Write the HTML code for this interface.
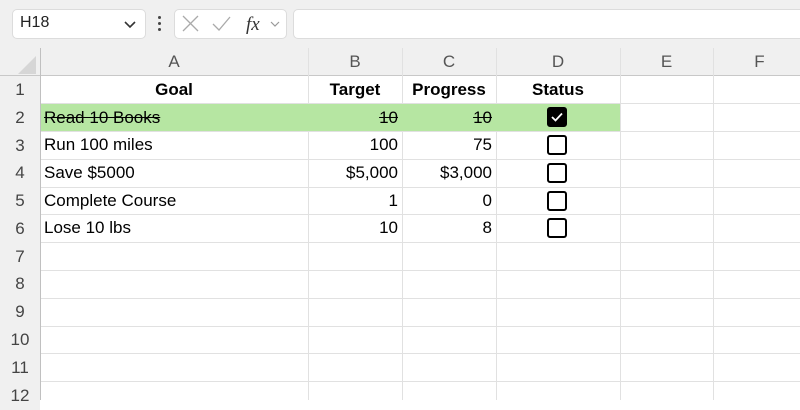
<!DOCTYPE html>
<html><head><style>
*{margin:0;padding:0;box-sizing:border-box}
body{width:800px;height:400px;overflow:hidden;background:#fff;font-family:"Liberation Sans",sans-serif;position:relative}
.a{position:absolute}
.tb{left:0;top:0;width:800px;height:48px;background:#f0f0f0}
.box{background:#fff;border:1px solid #dcdcdc;border-radius:5px}
.hl{position:absolute;left:0;width:800px;height:1px;background:#e1e1e1}
.vl{position:absolute;top:48px;height:352px;width:1px;background:#e1e1e1}
.ch{position:absolute;top:48px;height:28px;line-height:28px;text-align:center;font-size:17px;color:#555}
.rh{position:absolute;left:0;width:40px;text-align:center;font-size:17px;color:#444;background:#f0f0f0}
.c{position:absolute;font-size:17px;color:#000;height:28px;line-height:28px;white-space:nowrap}
.r{text-align:right}
.b{font-weight:bold;text-align:center}
.s{text-decoration:line-through}
.cb{position:absolute;width:20px;height:20px;border:2px solid #000;border-radius:3px;left:547px;background:#fff}
</style></head><body>
<div class="a tb"></div>
<div class="a box" style="left:12px;top:9px;width:134px;height:30px"></div>
<div class="a" style="left:20px;top:14px;font-size:16px;color:#222">H18</div>
<svg class="a" style="left:123px;top:19px" width="14" height="10"><path d="M2 3l5 5 5-5" stroke="#333" stroke-width="1.6" fill="none"/></svg>
<div class="a" style="left:158px;top:16px;width:3px;height:3px;background:#444;border-radius:2px"></div>
<div class="a" style="left:158px;top:22px;width:3px;height:3px;background:#444;border-radius:2px"></div>
<div class="a" style="left:158px;top:28px;width:3px;height:3px;background:#444;border-radius:2px"></div>
<div class="a box" style="left:174px;top:9px;width:113px;height:30px"></div>
<svg class="a" style="left:180px;top:13px" width="110" height="22"><path d="M3 3l15 15M18 3L3 18" stroke="#aaa" stroke-width="1.3" fill="none"/><path d="M33 11l6 6 11-13" stroke="#aaa" stroke-width="1.3" fill="none"/><text x="66" y="17" font-family="Liberation Serif" font-style="italic" font-size="19" fill="#333">fx</text><path d="M91 9l4 4 4-4" stroke="#999" stroke-width="1.2" fill="none"/></svg>
<div class="a box" style="left:293px;top:9px;width:520px;height:30px"></div>

<div class="a" style="left:0;top:48px;width:800px;height:28px;background:#f0f0f0"></div>
<div class="a" style="left:0;top:76px;width:40px;height:324px;background:#f0f0f0"></div>
<svg class="a" style="left:17px;top:55px" width="20" height="20"><path d="M19 1V19H1Z" fill="#d6d6d6"/></svg>

<div class="hl" style="top:75px;background:#c8c8c8"></div>
<div class="hl" style="top:103px;left:40px"></div>
<div class="hl" style="top:131px;left:40px"></div>
<div class="hl" style="top:159px;left:40px"></div>
<div class="hl" style="top:187px;left:40px"></div>
<div class="hl" style="top:214px;left:40px"></div>
<div class="hl" style="top:242px;left:40px"></div>
<div class="hl" style="top:270px;left:40px"></div>
<div class="hl" style="top:298px;left:40px"></div>
<div class="hl" style="top:326px;left:40px"></div>
<div class="hl" style="top:353px;left:40px"></div>
<div class="hl" style="top:381px;left:40px"></div>
<div class="vl" style="left:40px;background:#c0c0c0"></div>
<div class="vl" style="left:308px"></div>
<div class="vl" style="left:402px"></div>
<div class="vl" style="left:496px"></div>
<div class="vl" style="left:620px"></div>
<div class="vl" style="left:713px"></div>
<div class="a" style="left:41px;top:104px;width:579px;height:27px;background:#b6e6a2"></div>

<div class="ch" style="left:40px;width:268px">A</div>
<div class="ch" style="left:308px;width:94px">B</div>
<div class="ch" style="left:402px;width:94px">C</div>
<div class="ch" style="left:496px;width:124px">D</div>
<div class="ch" style="left:620px;width:93px">E</div>
<div class="ch" style="left:713px;width:93px">F</div>

<div class="rh" style="top:76px;line-height:28px">1</div>
<div class="rh" style="top:104px;line-height:28px">2</div>
<div class="rh" style="top:132px;line-height:28px">3</div>
<div class="rh" style="top:159px;line-height:28px">4</div>
<div class="rh" style="top:187px;line-height:28px">5</div>
<div class="rh" style="top:215px;line-height:28px">6</div>
<div class="rh" style="top:243px;line-height:28px">7</div>
<div class="rh" style="top:270px;line-height:28px">8</div>
<div class="rh" style="top:298px;line-height:28px">9</div>
<div class="rh" style="top:326px;line-height:28px">10</div>
<div class="rh" style="top:354px;line-height:28px">11</div>
<div class="rh" style="top:382px;line-height:28px">12</div>

<div class="c b" style="top:76px;left:40px;width:268px">Goal</div>
<div class="c b" style="top:76px;left:308px;width:94px">Target</div>
<div class="c b" style="top:76px;left:402px;width:94px">Progress</div>
<div class="c b" style="top:76px;left:496px;width:124px">Status</div>

<div class="c s" style="top:104px;left:44px">Read 10 Books</div>
<div class="c r s" style="top:104px;left:308px;width:90px">10</div>
<div class="c r s" style="top:104px;left:402px;width:90px">10</div>
<div class="c" style="top:131px;left:44px">Run 100 miles</div>
<div class="c r" style="top:131px;left:308px;width:90px">100</div>
<div class="c r" style="top:131px;left:402px;width:90px">75</div>
<div class="c" style="top:159px;left:44px">Save $5000</div>
<div class="c r" style="top:159px;left:308px;width:90px">$5,000</div>
<div class="c r" style="top:159px;left:402px;width:90px">$3,000</div>
<div class="c" style="top:187px;left:44px">Complete Course</div>
<div class="c r" style="top:187px;left:308px;width:90px">1</div>
<div class="c r" style="top:187px;left:402px;width:90px">0</div>
<div class="c" style="top:214px;left:44px">Lose 10 lbs</div>
<div class="c r" style="top:214px;left:308px;width:90px">10</div>
<div class="c r" style="top:214px;left:402px;width:90px">8</div>

<div class="cb" style="top:107px;background:#000"><svg width="16" height="16" style="position:absolute;left:0;top:0"><path d="M3 8l3.5 3.5L13 4.5" stroke="#fff" stroke-width="1.8" fill="none"/></svg></div>
<div class="cb" style="top:135px"></div>
<div class="cb" style="top:163px"></div>
<div class="cb" style="top:191px"></div>
<div class="cb" style="top:218px"></div>
</body></html>
